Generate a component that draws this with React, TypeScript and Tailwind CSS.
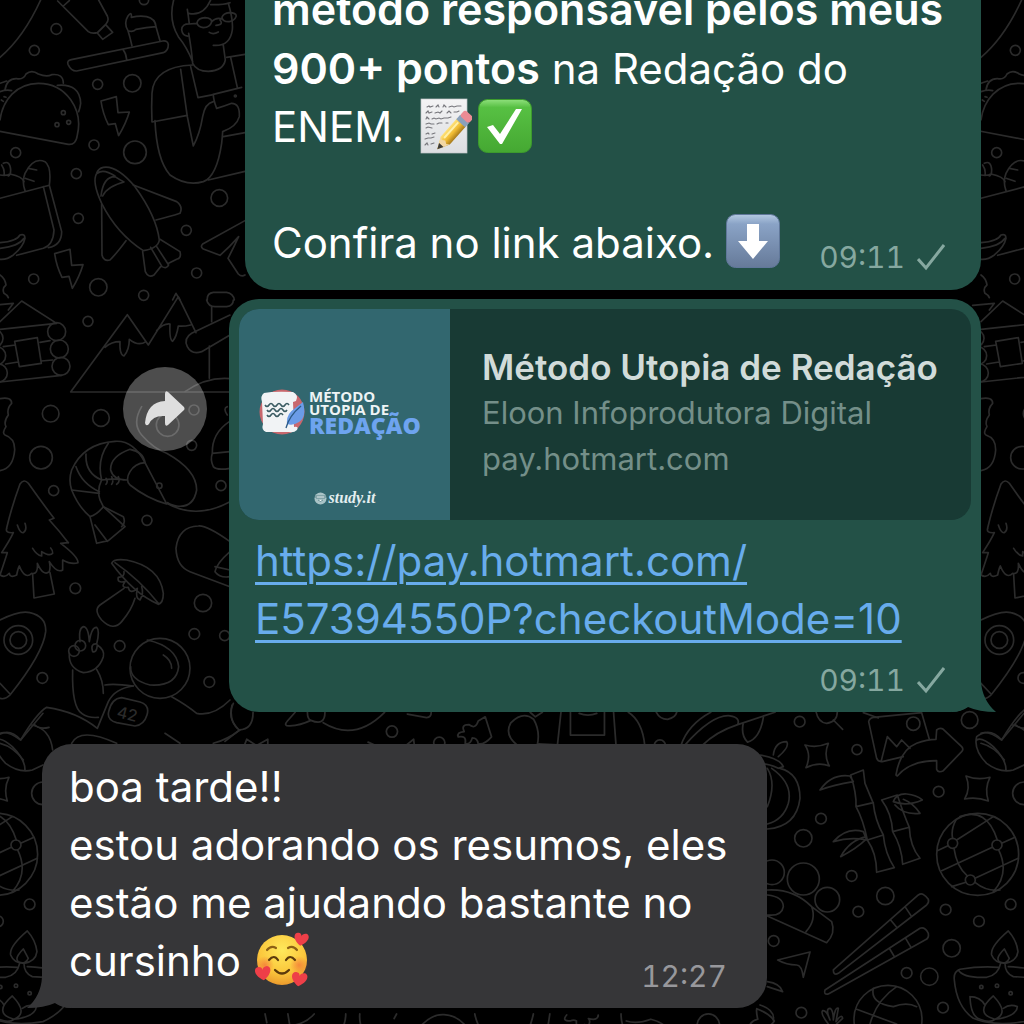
import type { ReactNode } from "react";

type Dot = [number, number, number];

// Wallpaper tile: circles as [cx, cy, r], one list per area of the pattern
const topDots: Dot[] = [
  [432, 0, 14], [169, 87, 16], [103, 151, 15], [293, 253, 15], [397, 250, 26],
  [282, 435, 15], [405, 457, 34], [47, 458, 15], [229, 521, 15], [235, 655, 15],
  [658, 594, 25], [559, 691, 15], [590, 819, 15], [101, 837, 15], [295, 862, 26],
  [431, 886, 15], [190, 338, 6], [171, 374, 6], [206, 367, 6], [706, 288, 3],
];

const topPaths = [
  // tube, toothbrush
  "M122 0C90 70 50 130 0 172",
  "M173 3L265 95Q275 102 292 98L318 72Q328 62 322 48L296 0M190 18L208 2M292 99L317 74L338 97L308 118Z",
  "M204 193Q200 182 214 179L488 123Q504 121 505 134Q505 152 490 158L230 213Q214 214 204 193ZM370 150Q378 160 380 178",
  "M396 138Q390 110 384 92Q370 70 384 48Q396 32 394 52Q420 46 440 50Q466 56 468 80L480 122M384 92Q400 98 408 88Q440 82 468 80",
  // taco
  "M-5 393L205 433Q228 436 232 405C250 330 200 250 115 250C50 250 8 300 0 360",
  "M15 270Q20 235 50 236Q70 240 78 222Q95 208 115 222Q140 232 155 224Q190 220 190 250M172 256Q240 250 242 310Q240 325 236 335M0 250L20 243M0 275Q20 268 35 272M4 300L10 304M12 290L18 292",
  // bolts
  "M303 303L349 290L354 338L388 336Q378 370 356 407L346 371L325 374Q308 340 303 303Z",
  "M164 761L210 748L215 796L249 794Q239 828 217 865L207 829L186 832Q169 798 164 761Z",
  // man with glasses
  "M521 0Q505 60 535 110Q560 140 578 185M566 100Q575 150 578 190Q590 214 625 214Q670 212 676 180L670 136M640 136Q690 140 697 90Q700 60 685 10",
  "M572 72Q545 70 545 90Q548 110 566 108M591 68Q595 54 615 53Q635 54 635 66Q630 82 610 83Q592 80 591 68ZM666 52Q670 40 688 38Q708 38 709 48Q704 62 688 65Q668 66 666 52ZM635 65Q650 50 668 58M562 28Q565 45 568 72L590 70M660 60Q672 74 648 76M628 97Q640 105 655 96M566 40Q610 50 632 0M632 14Q670 15 690 8",
  "M578 195Q460 200 456 280Q454 320 456 366L562 346M542 208L562 350L580 438Q600 400 608 350Q615 310 640 305M572 200L594 293L640 284",
  "M465 362Q470 480 510 525Q560 560 610 545Q650 530 665 430Q668 400 668 395Q710 380 718 350Q720 310 695 310Q670 320 650 325Q640 300 640 283L725 262M692 172L712 262M680 172L735 163M670 410L735 398M625 540L735 514",
  // grocery bag
  "M0 595L148 556Q155 500 135 485Q100 470 75 520Q65 545 75 572M130 560L162 690Q160 735 130 745L50 766M148 556L185 695Q185 735 145 743",
  "M0 728Q50 725 60 705Q75 700 75 715Q70 740 40 765Q20 780 0 778M0 745Q55 740 72 715M85 505L110 510M75 535L102 544M0 525Q20 528 30 522Q68 530 72 545M10 490Q30 480 32 510Q32 525 25 528M5 495Q15 510 12 525",
  // rocket
  "M290 520Q275 545 305 610Q350 700 430 752Q475 745 478 720Q470 650 405 560Q350 495 310 502Q295 505 290 520ZM303 588Q310 530 345 530Q360 540 372 546Q320 560 308 588M292 520Q310 505 345 528",
  "M400 555L530 605Q550 620 540 640Q510 650 468 660M305 612L306 765Q310 785 330 780Q350 760 378 722M428 755L436 815Q445 835 462 825L482 800M452 742L486 800Q500 808 506 795L470 740M480 718L540 755Q545 775 530 778L506 790",
  // paper plane
  "M735 662L608 732Q600 740 610 747L660 766Q690 740 716 710Q700 745 684 775L715 822Q725 832 735 825",
  "M0 825Q15 835 18 855Q5 865 12 880Q22 885 25 893M518 900L528 880L540 900M622 900Q620 880 640 877L680 877Q700 880 703 900",
];

const middleDots: Dot[] = [
  [170, 95, 27], [178, 147, 27], [183, 199, 27], [-18, 115, 27], [-10, 167, 27],
  [-5, 219, 27], [264, 64, 15], [152, 341, 25], [303, 354, 25], [123, 473, 34],
  [161, 572, 15], [441, 661, 15], [663, 557, 15], [582, 330, 15], [503, 375, 34],
  [575, 436, 15], [478, 557, 8],
];

const middlePaths = [
  // log cabin
  "M0 65L65 3L170 70L0 88M-25 16L40 10L25 30M44 124L112 113L124 190L58 200ZM10 140L46 135M120 127L150 122M17 192L54 186M124 183L158 180M0 246L185 226",
  // mountains
  "M690 276H212L382 44L445 135L535 -10L588 98M315 142Q335 125 360 125Q358 165 372 168Q388 150 388 118Q415 140 438 125M470 92Q490 70 510 72Q508 120 518 124Q530 110 535 78Q550 80 572 75",
  "M690 45L575 100Q550 115 562 140Q575 165 605 155L690 105M628 138V235M635 20V65M620 0Q625 20 645 20H680Q700 18 700 0M555 275Q620 230 690 236",
  "M425 320Q395 370 425 405Q460 445 500 460Q590 510 590 570Q580 625 530 618Q510 615 503 608M500 610Q590 660 690 605",
  // shrimp
  "M435 488Q400 420 345 424Q250 430 215 510Q205 540 215 570Q235 620 270 650L290 730L325 722L375 680L310 620M285 675L322 724M435 488L500 612Q440 595 390 555Q375 540 390 515Q405 490 435 488",
  "M390 448Q330 470 332 510Q340 540 380 540M325 430Q290 480 305 540M258 462Q255 520 305 540M228 500Q245 550 298 575M215 570L298 580M380 540Q340 535 305 540Q290 570 300 600L310 620Q290 645 270 650M310 620L370 650Q378 670 365 680M318 535Q325 545 318 553M335 530Q342 545 335 553M355 530Q362 545 350 553M390 448Q430 455 435 488",
  "M0 296Q35 290 35 310Q20 325 25 345Q10 365 18 380Q5 400 15 405Q45 415 44 450Q40 505 0 512",
  // tree top and hat
  "M20 684Q35 620 60 552Q72 535 85 550Q120 600 162 655L148 660Q180 695 205 728",
  "M688 365Q635 400 637 460L690 455M637 460Q630 480 640 500Q650 512 690 505M682 345Q668 325 682 320",
];

const lowerDots: Dot[] = [
  [226, 205, 16], [609, 249, 26], [583, 342, 16], [674, 347, 15], [359, 378, 16],
  [127, 474, 16], [628, 486, 16], [55, 360, 43], [55, 360, 25], [222, 393, 16],
  [241, 377, 16], [480, 445, 90],
];

const lowerPaths = [
  // pine tree
  "M20 25Q15 40 40 38Q30 60 5 98L22 98Q15 120 0 165Q15 175 28 160Q30 175 50 165Q54 145 58 138Q75 180 95 160Q115 165 112 130Q130 170 148 155Q152 140 148 125Q170 160 188 150V120Q215 135 234 128Q235 110 182 70L205 68M98 165L102 234L163 222L150 158M52 15Q60 40 70 38Q82 30 75 10M98 85Q110 105 125 108V95Q150 110 158 100Q158 90 152 84",
  "M0 300Q60 270 90 278Q140 290 137 335Q130 400 30 525Q15 540 0 535M0 490L30 522",
  // mushroom
  "M335 130Q340 115 380 120Q480 140 490 220Q490 250 475 253Q400 220 335 130ZM345 128Q420 180 475 250M372 205L300 255Q280 270 305 300Q340 335 365 305Q395 270 405 235M372 155Q375 170 355 172Q350 190 375 185Q360 205 385 202Q390 225 412 205Q405 235 420 240Q432 220 425 200",
  // skateboard
  "M690 65Q620 15 595 18Q535 20 528 85Q530 140 570 155L690 200M690 95Q650 130 645 155Q660 175 690 170M645 140L690 150",
  // astronaut
  "M240 365Q235 325 250 320Q265 320 268 365Q275 320 290 322Q300 330 290 372Q270 370 278 395Q290 400 292 375Q315 390 310 410Q295 455 250 458Q205 445 208 400M218 450Q215 560 245 580Q265 595 295 592M290 448Q310 480 310 520M315 495Q340 490 400 498",
  "M442 360Q530 380 536 440Q530 500 450 495Q390 480 392 440M490 405Q515 420 515 445",
  "M400 498Q345 505 325 545L292 625Q230 575 140 562Q110 580 62 660Q20 630 0 640M365 533L420 546Q450 555 441 585Q432 615 405 618L350 608Q320 600 326 575Q335 535 365 533Z",
  "M515 530Q560 555 590 580Q640 590 690 540M720 630Q680 660 640 670M700 550Q680 590 712 625M95 615Q150 625 158 690M0 670Q40 680 70 720M215 670Q240 620 350 670M495 640L540 670",
];

const cornerDots: Dot[] = [
  [119, 245, 16], [291, 329, 15], [460, 251, 20], [629, 240, 25], [536, 455, 16],
  [183, 536, 16], [130, 595, 26], [275, 708, 16], [376, 768, 26], [295, 815, 16],
  [557, 809, 16], [657, 844, 16], [752, 793, 16], [575, 925, 26], [440, 999, 16],
  [508, 1010, 26], [549, 1103, 16], [124, 1118, 16], [41, 903, 16], [792, 460, 34],
  [130, 717, 48], [202, 779, 37], [36, 697, 37], [653, 643, 123], [578, 610, 15],
  [711, 615, 15], [631, 720, 15], [384, 1138, 102], [664, 1041, 5], [711, 1037, 5],
  [752, 1060, 5],
];

const cornerPaths = [
  // sparkles
  "M135 315Q170 325 205 310Q190 345 208 378Q175 365 138 383Q155 345 135 315Z",
  "M618 408Q653 422 690 412Q673 445 685 483Q650 470 614 477Q633 445 618 408Z",
  // picture and arrow
  "M168 215Q175 248 200 250Q232 245 232 215M220 240L248 268M430 350L370 364Q355 368 350 355L326 245Q328 235 340 232L485 218L508 298M364 362L382 290L410 320L425 300L450 325M310 218L355 234",
  "M408 405Q420 330 470 310Q500 298 528 298L530 270Q540 262 550 268L605 320Q612 328 605 335L550 392Q535 400 530 388V362Q450 362 412 408Z",
  // boot
  "M792 220L725 300Q690 260 650 290Q640 330 680 370Q720 400 760 390L792 375M650 300Q665 290 700 320Q740 360 738 392M765 252Q780 270 810 262",
  // bamboo
  "M272 405L310 390L315 430L340 490Q345 540 370 585Q375 640 403 683L350 697Q350 640 322 600Q310 540 288 500Q290 460 272 405ZM288 500L340 488M322 600L370 585M180 450Q215 400 270 408L280 425Q220 435 180 450M220 605Q260 560 310 575L320 600Q270 590 220 605M320 590Q270 600 242 650Q290 625 318 598",
  "M365 480L412 465Q430 520 448 562Q450 620 480 655L428 673Q425 620 398 575Q395 520 365 480ZM398 575L448 562M400 485Q410 460 440 462Q470 465 487 480Q440 500 400 485M405 495Q430 525 480 520Q460 490 430 478",
  // globe lines
  "M588 540Q572 570 578 595M600 530Q680 500 712 600M716 630Q750 700 700 755M700 530L590 600M564 617L532 632M765 592L725 610M697 622L545 692M582 625Q590 680 622 708M645 715L775 655M618 727L575 740M645 727Q680 755 720 750",
  // chopsticks
  "M220 990L475 765Q490 755 505 778Q508 788 500 795L235 1000Q220 1008 220 990ZM392 840L410 862M435 800L455 830M195 1050L480 865Q495 860 505 880Q508 895 495 900L205 1062Q190 1065 195 1050ZM388 925L402 948M437 895L453 922",
  "M53 960L150 936L130 1012Q125 975 110 975Q80 975 53 960Z",
  "M22 750Q100 745 155 800L215 845Q228 880 200 908L22 828M155 800Q170 840 138 875M22 765Q70 770 70 800Q65 830 22 825",
  // basketball, hand
  "M340 1045Q330 1090 400 1100Q440 1085 470 1100M410 1040Q350 1080 330 1152M290 1108L410 1152M205 1152Q180 1120 188 1112Q200 1110 210 1140Q195 1105 210 1105Q220 1110 220 1140Q225 1100 235 1105L228 1145Q245 1120 248 1135L230 1152M22 1025Q60 1030 68 1055L22 1040M0 1095Q45 1110 40 1140",
  // oil lamp
  "M745 873Q690 920 695 945Q705 970 735 970Q770 965 774 935Q770 900 745 873ZM733 927Q705 955 718 965Q740 975 748 955ZM583 1020Q580 995 600 988Q660 978 715 982M745 980Q840 985 880 1010Q890 1100 792 1145Q700 1160 640 1135Q590 1100 583 1020M595 990Q610 1015 680 1012Q715 1005 722 970M735 970Q735 1000 760 1010L850 1015",
  "M630 1070Q632 1130 660 1138Q690 1150 705 1138Q640 1120 700 1068Q750 1120 705 1138Q770 1130 772 1100Q750 1090 730 1105M630 1070Q660 1070 675 1095",
  // ornament
  "M0 345Q60 355 70 380L55 385Q25 370 0 372M40 345Q45 305 80 305Q90 320 55 350M60 385Q120 400 120 475Q110 560 22 567M35 385Q100 430 85 490Q70 540 22 552M22 385Q50 430 22 500",
];

const stripDots: Dot[] = [[476, 90, 16], [611, 122, 16], [1240, 130, 16]];

const stripPaths = [
  "M20 15Q10 60 40 85Q80 85 80 35M0 118L38 88M200 35L178 60Q165 75 185 74Q215 72 245 58Q285 75 285 35M235 35Q235 55 245 58M280 65Q370 120 455 35M520 40L575 50Q588 50 588 35",
  "M695 70Q715 85 722 60L742 48L760 105Q740 128 722 125Q720 108 705 108Q700 128 685 125Q690 100 665 105Q660 92 682 90Q672 70 695 70Z",
  "M890 130Q900 90 880 55Q850 30 815 65Q795 100 835 130M870 35L885 48L905 35M895 125L948 128L958 35M985 35V100H1082V35M1010 38Q1035 48 1060 38M1108 35L1115 130M1150 35Q1190 60 1197 130M1230 35Q1240 55 1262 55Q1285 50 1288 35",
  "M1300 130Q1320 70 1385 35M1310 130Q1390 40 1440 45Q1470 50 1462 70Q1400 90 1360 130M1462 70L1568 35M1478 65Q1470 100 1490 120Q1525 110 1535 50M55 130L62 112L90 130L122 112V130M408 120L430 130M515 130L538 112L540 130",
];

const bottomDots: Dot[] = [[1364, 357, 32]];

const bottomPaths = [
  "M70 370Q100 350 150 360Q210 360 240 325M100 325L105 350M165 325L170 355M330 325Q330 350 318 370M370 325Q368 350 378 370M475 325L468 338M535 370Q570 325 610 327Q655 330 680 370M698 325Q705 360 720 370M865 325Q860 350 850 370M860 355L880 370M912 325L905 370",
  "M960 328Q945 345 970 345Q980 340 988 345Q985 365 1005 360Q1010 350 1020 362Q1030 345 1022 338Q1050 345 1050 328M1115 325Q1115 350 1125 370M1130 345Q1160 355 1200 340Q1240 350 1245 370M1480 370Q1480 345 1505 340Q1500 320 1502 310Q1540 325 1552 345Q1540 365 1515 362",
];

function Doodles({ at, dots, paths }: { at: string; dots: Dot[]; paths: string[] }) {
  return (
    <g transform={at}>
      {dots.map(([cx, cy, r]) => (
        <circle key={`${cx}-${cy}-${r}`} cx={cx} cy={cy} r={r} />
      ))}
      {paths.map((d) => (
        <path key={d} d={d} />
      ))}
    </g>
  );
}

function Wallpaper() {
  return (
    <svg
      aria-hidden="true"
      className="absolute top-0 left-0"
      width="1024"
      height="1024"
      viewBox="0 0 1024 1024"
      fill="none"
      stroke="#2b2b2b"
      strokeWidth="5"
      strokeLinecap="round"
      strokeLinejoin="round"
    >
      <g id="left-tile">
        <Doodles at="scale(.3333)" dots={topDots} paths={topPaths} />
        <Doodles at="translate(0 300) scale(.3333)" dots={middleDots} paths={middlePaths} />
        <Doodles at="translate(0 520) scale(.3333)" dots={lowerDots} paths={lowerPaths} />
        <text
          x="116"
          y="717"
          transform="rotate(14 116 717)"
          className="font-['Inter',sans-serif] text-[16px] font-medium"
          fill="#2b2b2b"
          stroke="none"
        >
          42
        </text>
      </g>
      <use href="#left-tile" x="981" />
      <g id="right-tile">
        <Doodles at="translate(760 640) scale(.3333)" dots={cornerDots} paths={cornerPaths} />
      </g>
      <use href="#right-tile" x="-981" />
      <Doodles at="translate(225 700) scale(.3507)" dots={stripDots} paths={stripPaths} />
      <Doodles at="translate(230 900) scale(.3507)" dots={bottomDots} paths={bottomPaths} />
    </svg>
  );
}

function MemoEmoji() {
  return (
    <svg role="img" aria-label="📝" viewBox="0 1 54 58" className="ml-0.5 inline-block h-[58px] w-[54px] align-top">
      <defs>
        <linearGradient id="paper" x1="0" y1="0" x2="0" y2="1">
          <stop offset="0" stopColor="#f4f4f5" />
          <stop offset="1" stopColor="#dcdee1" />
        </linearGradient>
        <linearGradient id="pencil" x1="0" y1="0" x2="1" y2="0">
          <stop offset="0" stopColor="#ffe27a" />
          <stop offset=".55" stopColor="#f0bb32" />
          <stop offset="1" stopColor="#a67a1c" />
        </linearGradient>
      </defs>
      <rect x="3" y="2" width="46" height="54" fill="url(#paper)" stroke="#c3c6c9" strokeWidth=".7" />
      <g fill="none" stroke="#77777c" strokeWidth="1.1" strokeLinecap="round">
        <path d="M9 10l2-1 1 1 3-1M18 10l2-2 1 2M25 10l1-2 2 2M31 10l3-1 2 1 3-1 4 0" />
        <path d="M8 16l2-2 1 2 3-1M17 16l3-1 2 1 2-2M29 16l2-2 2 2M36 15l3 0 2-1" />
        <path d="M8 22l1-2 2 2M14 22l2-1 2 1 3-1 2 1 3-1 4 0 3-1" />
        <path d="M8 27l3-1 2 1 3 0M19 27l2-1 3 0M28 26l2 0M8 31l2-1 4 1" />
        <path d="M8 37l2-1 1 1M14 37l3-1M7 42l3-1 3 0 3-1M7 48l2-2 1 2M13 47l3-1" />
      </g>
      <g transform="rotate(42 34 36)">
        <path d="M28 22h12v24l-6 12l-6-12z" fill="url(#pencil)" />
        <path d="M31.500 24v21" stroke="#fff0a8" strokeWidth="2" />
        <path d="M28 46l3 2 3-2 3 2 3-2-6 12z" fill="#f2d7a4" />
        <path d="M31 52h6l-3 6z" fill="#3c3b38" />
        <rect x="28" y="17" width="12" height="6" fill="#8aa1bb" />
        <rect x="28" y="10" width="12" height="8" rx="3" fill="#ec8b94" />
      </g>
    </svg>
  );
}

function CheckEmoji() {
  return (
    <svg role="img" aria-label="✅" viewBox="0 1 54 58" className="ml-1.5 inline-block h-[58px] w-[54px] align-top">
      <defs>
        <linearGradient id="green-key" x1="0" y1="0" x2="0" y2="1">
          <stop offset="0" stopColor="#8fe07c" />
          <stop offset=".15" stopColor="#57c043" />
          <stop offset="1" stopColor="#45a832" />
        </linearGradient>
      </defs>
      <rect x="0.5" y="2.500" width="53" height="53" rx="9" fill="url(#green-key)" stroke="#3d9a2d" />
      <path d="M9 30l6-2 7 9L38 12h6L24 47h-2z" fill="#fff" />
    </svg>
  );
}

function ArrowDownEmoji() {
  return (
    <svg role="img" aria-label="⬇️" viewBox="0 2 54 58" className="inline-block h-[58px] w-[54px] align-top">
      <defs>
        <linearGradient id="blue-key" x1="0" y1="0" x2="0" y2="1">
          <stop offset="0" stopColor="#b4c9e2" />
          <stop offset=".18" stopColor="#8aa3c6" />
          <stop offset="1" stopColor="#667a99" />
        </linearGradient>
      </defs>
      <rect x="0.5" y="2.500" width="53" height="53" rx="9" fill="url(#blue-key)" stroke="#60779a" />
      <path d="M21 12h12v17h9L27 47L12 29h9z" fill="#fff" />
    </svg>
  );
}

function HeartsEmoji() {
  const heart = "M0 5C-8 0-7-6-3-6C-1-6 0-5 0-3C0-5 2-6 4-6C8-5 7 1 0 5Z";
  return (
    <svg role="img" aria-label="🥰" viewBox="0 1 54 58" className="ml-0.5 inline-block h-[58px] w-[54px] align-top">
      <defs>
        <radialGradient id="face" cx=".5" cy=".3" r=".75">
          <stop offset="0" stopColor="#ffe95c" />
          <stop offset=".6" stopColor="#fbc73c" />
          <stop offset="1" stopColor="#e8922a" />
        </radialGradient>
        <radialGradient id="blush">
          <stop offset="0" stopColor="#f2703a" stopOpacity=".7" />
          <stop offset="1" stopColor="#f2703a" stopOpacity="0" />
        </radialGradient>
      </defs>
      <circle cx="27" cy="29" r="25" fill="url(#face)" />
      <circle cx="10" cy="34" r="9" fill="url(#blush)" />
      <circle cx="44" cy="34" r="9" fill="url(#blush)" />
      <g fill="none" stroke="#5c3a0c" strokeWidth="2.200" strokeLinecap="round">
        <path d="M12 19Q16 14 21 17M33 17Q38 14 42 19" stroke="#8d6015" />
        <path d="M14 29Q19 23 23 29M31 29Q35 23 40 29M20 39Q27 46 34 39" />
      </g>
      <g fill="#ee3f48">
        <path d={heart} transform="translate(46 9) rotate(8) scale(1.150)" />
        <path d={heart} transform="translate(8 43) rotate(-8) scale(1.250)" />
        <path d={heart} transform="translate(44 49) rotate(8) scale(1.250)" />
      </g>
    </svg>
  );
}

function BubbleTail({ className }: { className: string }) {
  return (
    <svg aria-hidden="true" width="44" height="31" viewBox="0 0 44 31" className={`absolute bottom-0 ${className}`}>
      <path d="M29 0Q30 19 44 31Q27 31 16 26Q9 31 0 31V0Z" fill="currentColor" />
    </svg>
  );
}

function MessageTime({ time, sent = false, className }: { time: string; sent?: boolean; className: string }) {
  return (
    <div className={`flex items-center justify-end gap-3 text-[30px] leading-[36px] tabular-nums ${className}`}>
      <time>{time}</time>
      {sent && (
        <svg aria-label="Enviada" role="img" width="28" height="28" viewBox="0 0 28 28" fill="none">
          <path d="M1 16L9 25L27 2" stroke="currentColor" strokeWidth="3" />
        </svg>
      )}
    </div>
  );
}

function CourseThumbnail() {
  return (
    <div className="flex w-[211px] shrink-0 flex-col items-center bg-[#32676f] pt-[79px]">
      <div className="flex items-center gap-1 self-start pl-5">
        <svg aria-hidden="true" width="46" height="48" viewBox="0 0 46 48">
          <circle cx="23" cy="24" r="22.500" fill="#c8676d" />
          <path d="M5 5Q15 3 34 4Q40 7 37 13L34 14L35 39Q40 38 38 42Q35 45 30 44H7Q2 42 4 36L3 14Q1 8 5 5Z" fill="#f1f3f5" />
          <path
            d="M6 17q2 3 4 0t4 0t4 0t4 0t4 0t4 0M8 22q2 3 4 0t4 0t4 0t4 0t4 0M8 27q2 3 4 0t4 0t4 0t4 0"
            fill="none"
            stroke="#3c5c63"
            strokeWidth="1.600"
          />
          <path d="M44 14Q48 30 40 34Q34 38 28 36Q27 26 35 21Z" fill="#6b9ce8" />
          <path d="M42 18Q30 28 27 40" fill="none" stroke="#2c5a86" strokeWidth="1.300" />
        </svg>
        <div className="font-['Open_Sans','Inter',sans-serif] text-[15px] leading-[13px] font-bold text-[#eef4f5]">
          <p>MÉTODO</p>
          <p>UTOPIA DE</p>
          <p className="text-[23px] leading-[18px] font-extrabold text-[#6ea4ef]">REDAÇÃO</p>
        </div>
      </div>
      <div className="mt-auto mb-3 flex items-center gap-0.5 text-[#e4eeef]">
        <svg aria-hidden="true" width="13" height="13" viewBox="0 0 13 13">
          <circle cx="6.500" cy="6.500" r="6" fill="#a9c3c6" />
          <path d="M2 4h9v2H2zM4 8q2.500 3 5 0" fill="#f5fafa" stroke="#47757b" strokeWidth=".8" />
        </svg>
        <span className="font-['Liberation_Serif',serif] text-[16px] leading-[20px] font-bold italic">study.it</span>
      </div>
    </div>
  );
}

function LinkPreview() {
  return (
    <a
      href="https://pay.hotmart.com/E57394550P?checkoutMode=10"
      className="flex h-[211px] overflow-hidden rounded-[20px] bg-[#183a34]"
    >
      <CourseThumbnail />
      <div className="min-w-0 flex-1 pt-[35px] pl-8 text-[31px] leading-[46px] whitespace-nowrap text-[#748f89]">
        <p className="text-[35px] font-semibold text-[#d1dbd9]">Método Utopia de Redação</p>
        <p>Eloon Infoprodutora Digital</p>
        <p>pay.hotmart.com</p>
      </div>
    </a>
  );
}

function Message({ children, className }: { children: ReactNode; className: string }) {
  return <article className={`relative text-[42px] leading-[58px] ${className}`}>{children}</article>;
}

export default function App() {
  return (
    <main className="relative min-h-screen overflow-hidden bg-black font-['Inter',sans-serif] text-white">
      <Wallpaper />

      <div className="relative flex flex-col pr-[43px]">
        <Message className="-mt-[20px] ml-[245px] h-[310px] rounded-b-[30px] bg-[#235147] pr-9 pl-[27px]">
          <p>
            <strong className="text-[43px] font-semibold">
              método responsável pelos meus
              <br />
              900+ pontos
            </strong>{" "}
            na Redação do
            <br />
            ENEM. <MemoEmoji />
            <CheckEmoji />
          </p>
          <p className="mt-[58px]">
            Confira no link abaixo. <ArrowDownEmoji />
          </p>
          <MessageTime time="09:11" sent className="absolute right-9 bottom-[15px] text-[#86a8a0]" />
        </Message>

        <div className="mt-[9px] flex items-start gap-[22px] pl-[123px]">
          <button
            type="button"
            aria-label="Encaminhar"
            className="mt-[68px] flex size-[84px] shrink-0 items-center justify-center rounded-full bg-white/30"
          >
            <svg aria-hidden="true" width="40" height="36" viewBox="0 0 40 36" fill="#dedede">
              <path d="M20 3Q20 -1 23 1L39 16Q40 18 39 19L23 34Q20 36 20 32V25Q8 24 4 33Q1 36 0 32Q2 11 20 10Z" />
            </svg>
          </button>
          <Message className="min-w-0 flex-1 rounded-[30px] bg-[#235147] p-[10px] pb-[14px] text-[#235147]">
            <LinkPreview />
            <a
              href="https://pay.hotmart.com/E57394550P?checkoutMode=10"
              className="mt-3 block px-4 text-[#68acec] underline decoration-[3px] underline-offset-[6px]"
            >
              https://pay.hotmart.com/
              <wbr />
              E57394550P?checkoutMode=10
            </a>
            <MessageTime time="09:11" sent className="mt-[14px] pr-[26px] text-[#86a8a0]" />
            <BubbleTail className="-right-[15px]" />
          </Message>
        </div>

        <Message className="mt-8 ml-[42px] w-[725px] rounded-[30px] bg-[#363638] pt-[14px] pr-8 pb-[18px] pl-[27px] text-[#363638]">
          <p className="text-white">
            boa tarde!!
            <br />
            estou adorando os resumos, eles estão me ajudando bastante no cursinho <HeartsEmoji />
          </p>
          <MessageTime time="12:27" className="absolute right-10 bottom-[14px] text-[#98989c]" />
          <BubbleTail className="-left-[15px] -scale-x-100" />
        </Message>
      </div>
    </main>
  );
}
